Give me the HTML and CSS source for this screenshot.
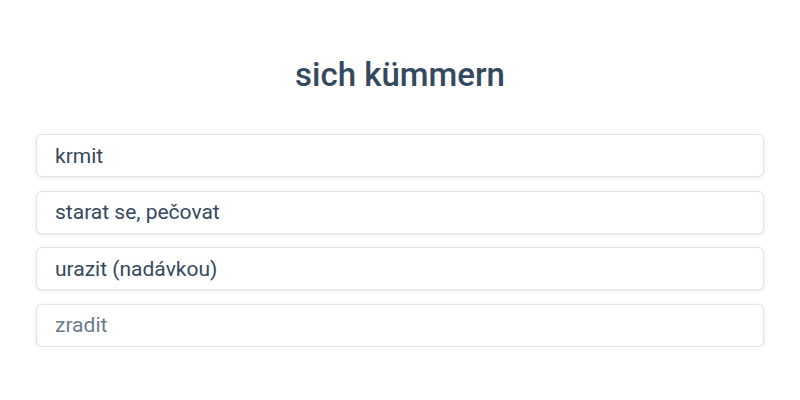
FILE: index.html
```html
<!DOCTYPE html>
<html lang="cs">
<head>
  <meta charset="UTF-8">
  <title>sich kümmern</title>
  <link rel="stylesheet" href="styles.css">
</head>
<body>
  <div class="quiz">
    <h1 class="word">sich kümmern</h1>
    <div class="options">
      <div class="option">krmit</div>
      <div class="option">starat se, pečovat</div>
      <div class="option">urazit (nadávkou)</div>
      <div class="option faded">zradit</div>
    </div>
  </div>
</body>
</html>
```

FILE: styles.css
```css
body {
  margin: 0;
  background: #fff;
  font-family: Roboto, "Noto Sans", sans-serif;
  color: #34495e;
}

.quiz {
  padding: 54px 36px 0;
}

.word {
  margin: 0 0 38px;
  text-align: center;
  font-size: 33px;
  font-weight: 500;
  line-height: 42px;
}

.options {
  display: flex;
  flex-direction: column;
  gap: 13.5px;
}

.option {
  box-sizing: border-box;
  height: 43px;
  display: flex;
  align-items: center;
  padding: 0 18px;
  font-size: 21px;
  background: #fff;
  border: 1px solid #e4e4e4;
  border-radius: 6px;
  box-shadow: 0 1px 4px rgba(0, 0, 0, 0.1);
}

.option.faded {
  color: #6b7b8c;
}
```
